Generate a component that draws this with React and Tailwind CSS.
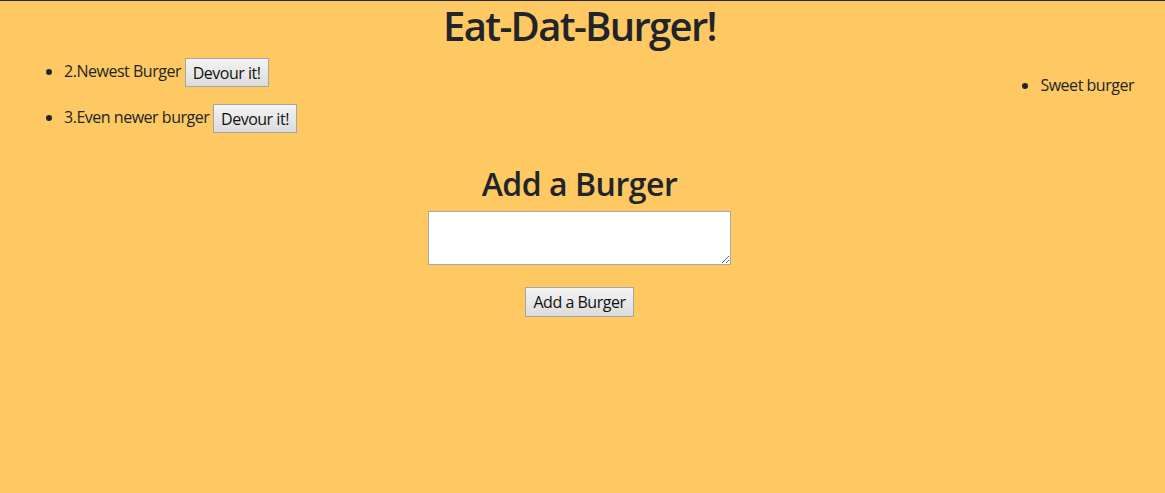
import React from "react";

const devoured = ["Sweet burger"];
const burgers = [
  { id: 2, name: "Newest Burger" },
  { id: 3, name: "Even newer burger" },
];

function OldButton({ children, className = "" }) {
  return (
    <button
      type="button"
      className={`bg-gradient-to-b from-[#f4f4f4] to-[#dcdcdc] border border-[#a6a6a6] text-[#111] text-[16px] leading-[20px] px-[7px] align-middle ${className}`}
    >
      {children}
    </button>
  );
}

export default function App() {
  return (
    <div
      className="min-h-[493px] bg-[#fec962] border-t border-[#22262a] text-[#212529] pr-[6px] tracking-[-0.03em]"
      style={{ fontFamily: '"Open Sans", "Noto Sans", sans-serif' }}
    >
      <h1 className="text-center text-[40px] font-semibold leading-[48px] pt-px mb-[7px] tracking-[-0.042em]">
        Eat-Dat-Burger!
      </h1>

      <div className="flex justify-between">
        <ul className="list-disc pl-10 ml-6 mb-4">
          {burgers.map((b) => (
            <li key={b.id} className="mb-4 text-[16px] leading-[29px]">
              {b.id}.{b.name} <OldButton className="h-[29px]">Devour it!</OldButton>
            </li>
          ))}
        </ul>
        <ul className="list-disc pl-10 mt-4 mr-[25px]">
          {devoured.map((d) => (
            <li key={d} className="text-[16px] leading-6">
              {d}
            </li>
          ))}
        </ul>
      </div>

      <div className="flex flex-col items-center">
        <h2 className="text-[32px] font-semibold leading-[38px] mb-2">Add a Burger</h2>
        <textarea className="block w-[303px] h-[54px] bg-white border border-[#a9a9a9] resize-y" />
        <OldButton className="h-[30px] mt-[22px]">Add a Burger</OldButton>
      </div>
    </div>
  );
}
